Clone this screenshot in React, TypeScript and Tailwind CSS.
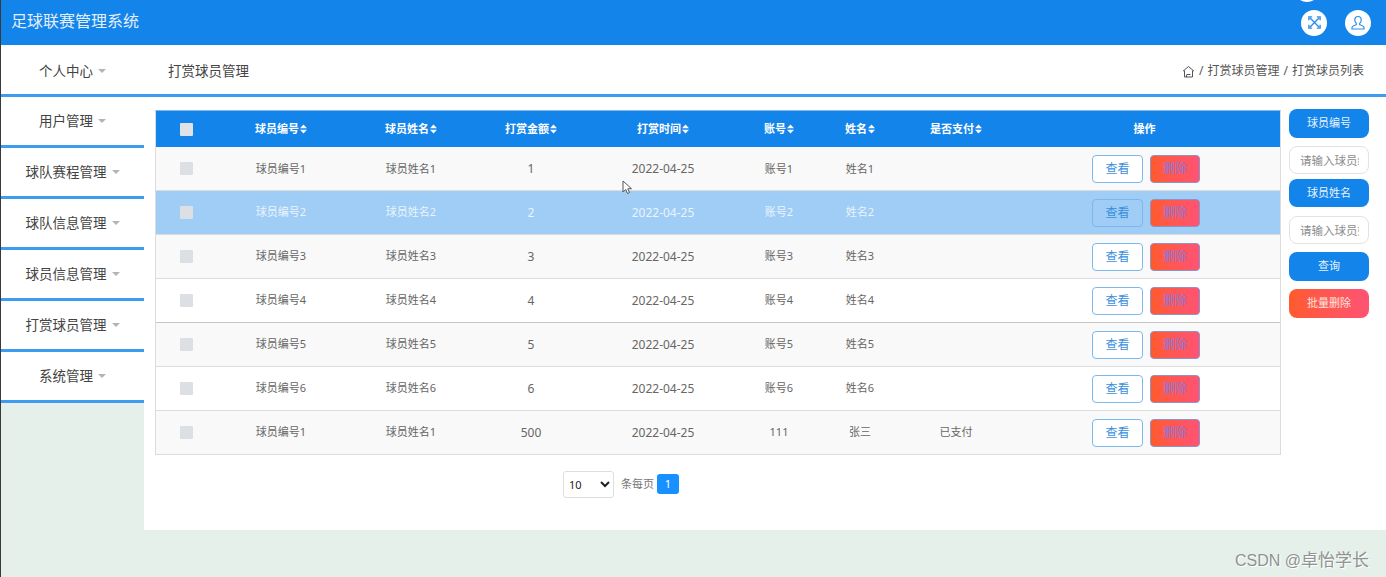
const menus = ["个人中心", "用户管理", "球队赛程管理", "球队信息管理", "球员信息管理", "打赏球员管理", "系统管理"];

const columns = ["球员编号", "球员姓名", "打赏金额", "打赏时间", "账号", "姓名", "是否支付"];

const rows = [
  ["球员编号1", "球员姓名1", "1", "2022-04-25", "账号1", "姓名1", ""],
  ["球员编号2", "球员姓名2", "2", "2022-04-25", "账号2", "姓名2", ""],
  ["球员编号3", "球员姓名3", "3", "2022-04-25", "账号3", "姓名3", ""],
  ["球员编号4", "球员姓名4", "4", "2022-04-25", "账号4", "姓名4", ""],
  ["球员编号5", "球员姓名5", "5", "2022-04-25", "账号5", "姓名5", ""],
  ["球员编号6", "球员姓名6", "6", "2022-04-25", "账号6", "姓名6", ""],
  ["球员编号1", "球员姓名1", "500", "2022-04-25", "111", "张三", "已支付"],
];

function SortArrows() {
  return (
    <svg width="7" height="10" viewBox="0 0 7 10" className="ml-px inline-block align-[-1px]" fill="#fff">
      <path d="M3.500 0.500 7 4.200H0z" />
      <path d="M3.500 9.500 7 5.800H0z" />
    </svg>
  );
}

function Caret() {
  return <span className="ml-[5px] inline-block border-x-4 border-t-[4px] border-x-transparent border-t-[#b4b4b4] align-[3px]" />;
}

function Sidebar() {
  return (
    <aside className="w-[143px] shrink-0">
      {menus.map((m, i) => (
        <div
          key={m}
          className={`flex items-center justify-center border-b-[3px] border-[#3d9cf0] bg-white text-[13.500px] text-[#444] ${
            i === 0 ? "h-[52px] pt-[3px]" : "h-[51px]"
          }`}
        >
          <span>
            {m}
            <Caret />
          </span>
        </div>
      ))}
    </aside>
  );
}

function Table() {
  return (
    <table className="w-full table-fixed border-collapse text-center text-[11px] text-[#666]">
      <colgroup>
        <col className="w-[61px]" />
        <col className="w-[128px]" />
        <col className="w-[132px]" />
        <col className="w-[108px]" />
        <col className="w-[156px]" />
        <col className="w-[76px]" />
        <col className="w-[86px]" />
        <col className="w-[106px]" />
        <col className="w-[271px]" />
      </colgroup>
      <thead>
        <tr className="h-[36px] bg-[#1384ea] font-bold text-white">
          <th>
            <span className="mx-auto block size-[13px] rounded-[1px] bg-[#dfe3e7]" />
          </th>
          {columns.map((c) => (
            <th key={c}>
              {c}
              <SortArrows />
            </th>
          ))}
          <th>操作</th>
        </tr>
      </thead>
      <tbody>
        {rows.map((r, i) => {
          const selected = i === 1;
          return (
            <tr
              key={i}
              className={`border-b ${i === 3 ? "border-[#c6c6c6]" : "border-[#dcdcdc]"} ${i === 0 ? "h-[43px]" : "h-[44px]"} ${
                selected ? "bg-[#9fcdf5] text-[#e9f4fd]" : i % 2 === 0 ? "bg-[#f9f9f9]" : "bg-white"
              }`}
            >
              <td>
                <span className="mx-auto block size-[13px] rounded-[1px] bg-[#dcdfe4]" />
              </td>
              {r.map((v, j) => (
                <td key={j} className={`pt-px ${j === 2 || j === 3 ? "text-[12px]" : ""}`}>
                  {v}
                </td>
              ))}
              <td>
                <div className="flex justify-center gap-[7px] pl-[3px] pt-px">
                  <button
                    className={`h-[28px] w-[51px] rounded-[4px] border border-[#7ab8ee] text-[12px] text-[#3a8fdc] ${
                      selected ? "bg-transparent" : "bg-white"
                    }`}
                  >
                    查看
                  </button>
                  <button className="h-[28px] w-[50px] rounded-[4px] border border-[#8b93c9] bg-gradient-to-r from-[#ff5a2b] to-[#ff5372] text-[12px] text-[#8a78dc]">
                    删除
                  </button>
                </div>
              </td>
            </tr>
          );
        })}
      </tbody>
    </table>
  );
}

function SidePanel() {
  return (
    <div className="flex w-[80px] flex-col text-[11px]">
      <button className="h-[29px] rounded-lg bg-[#1384ea] text-[#e8f3fd]">球员编号</button>
      <input
        readOnly
        placeholder="请输入球员编号"
        className="mt-2 h-[28px] w-full rounded-lg border border-[#e2e2e2] bg-white pl-[10px] pr-[9px] text-[11.500px] placeholder:text-[#8c8c8c]"
      />
      <button className="mt-[5px] h-[28px] rounded-lg bg-[#1384ea] text-[#e8f3fd]">球员姓名</button>
      <input
        readOnly
        placeholder="请输入球员姓名"
        className="mt-[9px] h-[28px] w-full rounded-lg border border-[#e2e2e2] bg-white pl-[10px] pr-[9px] text-[11.500px] placeholder:text-[#8c8c8c]"
      />
      <button className="mt-2 h-[29px] rounded-lg bg-[#1384ea] text-[#e8f3fd]">查询</button>
      <button className="mt-2 h-[29px] rounded-lg bg-gradient-to-r from-[#ff5a2b] to-[#ff5372] text-[#fbe4df]">批量删除</button>
    </div>
  );
}

export default function App() {
  return (
    <div className="relative h-[577px] overflow-hidden border-l border-[#3a3a3a] bg-[#e6f0eb] font-['Noto_Sans','Noto_Sans_CJK_SC',sans-serif]">
      {/* top bar */}
      <header className="flex h-[45px] items-center justify-between bg-[#1384ea] pl-[10px] pr-[15px]">
        <h1 className="pb-[4px] text-[16px] text-[#e3f0fc]">足球联赛管理系统</h1>
        <div className="flex items-center gap-[18px]">
          <span className="flex size-[26px] items-center justify-center rounded-full bg-white">
            <svg width="15" height="15" viewBox="0 0 16 16" fill="none" stroke="#2c90e8" strokeWidth="1.500">
              <path d="M3 3l10 10M13 3 3 13" />
              <path d="M2 5.500V2h3.500M10.500 2H14v3.500M14 10.500V14h-3.500M5.500 14H2v-3.500" />
            </svg>
          </span>
          <span className="flex size-[26px] items-center justify-center rounded-full bg-white">
            <svg width="16" height="16" viewBox="0 0 16 16" fill="none" stroke="#2c90e8" strokeWidth="1.200">
              <path d="M8 1.500c-2 0-3.200 1.500-3.200 3.400 0 1.500.7 2.700 1.500 3.400v1.300c-1.500.6-4.300 1.100-4.300 2.900v1.500h12v-1.500c0-1.800-2.800-2.300-4.300-2.900V8.300c.8-.7 1.500-1.900 1.500-3.400 0-1.900-1.200-3.400-3.200-3.400z" />
            </svg>
          </span>
        </div>
      </header>

      <div className="flex">
        <Sidebar />
        <main className="h-[485px] flex-1 bg-white">
          {/* title bar */}
          <div className="flex h-[52px] items-center justify-between border-b-[3px] border-[#3d9cf0] pl-6 pr-[22px] pt-[3px]">
            <h2 className="text-[13.500px] text-[#444]">打赏球员管理</h2>
            <div className="flex items-center gap-1 text-[12px] text-[#555]">
              <svg width="13" height="13" viewBox="0 0 13 13" fill="none" stroke="#555" strokeWidth="1">
                <path d="M1 6.200 6.500 1.500 12 6.200M2.500 5.500V12h8V5.500M4.500 9.500h4M4.500 12v-2" />
              </svg>
              <span>/</span>
              <span>打赏球员管理</span>
              <span>/</span>
              <span>打赏球员列表</span>
            </div>
          </div>

          <div className="flex items-start gap-2 pl-[11px] pt-[13px]">
            <div>
              <div className="w-[1126px] border-x border-t border-x-[#dcdcdc] border-t-[#7fb9ee]">
                <Table />
              </div>
              {/* pagination */}
              <div className="mt-4 flex items-center justify-center pr-[194px] text-[11px] text-[#777]">
                <select className="h-[27px] w-[51px] rounded-[3px] border border-[#dedede] bg-white pl-[1px] text-[11px] text-[#222]">
                  <option>10</option>
                </select>
                <span className="ml-[7px]">条每页</span>
                <span className="ml-[3px] flex h-[20px] w-[22px] items-center justify-center rounded-[3px] bg-[#1890ff] text-white">1</span>
              </div>
            </div>
            <div className="-mt-px">
              <SidePanel />
            </div>
          </div>
        </main>
      </div>

      {/* edge of a circle cut off by the top of the window */}
      <span className="absolute left-[1293px] top-[-24px] size-[26px] rounded-full bg-white" />

      {/* stray mouse cursor captured in the recording */}
      <svg className="absolute left-[621px] top-[180px]" width="11" height="15" viewBox="0 0 11 15" fill="#fff" stroke="#555" strokeWidth="1">
        <path d="M1 1v11l2.800-2.500L5.500 13.500l2-1-1.700-3.800H9.500z" />
      </svg>

      {/* watermark */}
      <span className="absolute left-[1234px] top-[548px] font-['Liberation_Sans','Noto_Sans_CJK_SC',sans-serif] text-[16px] text-[#8f9391] [text-shadow:1px_1px_0_#fff]">
        CSDN @<span className="text-[17px]">卓怡学长</span>
      </span>
    </div>
  );
}
